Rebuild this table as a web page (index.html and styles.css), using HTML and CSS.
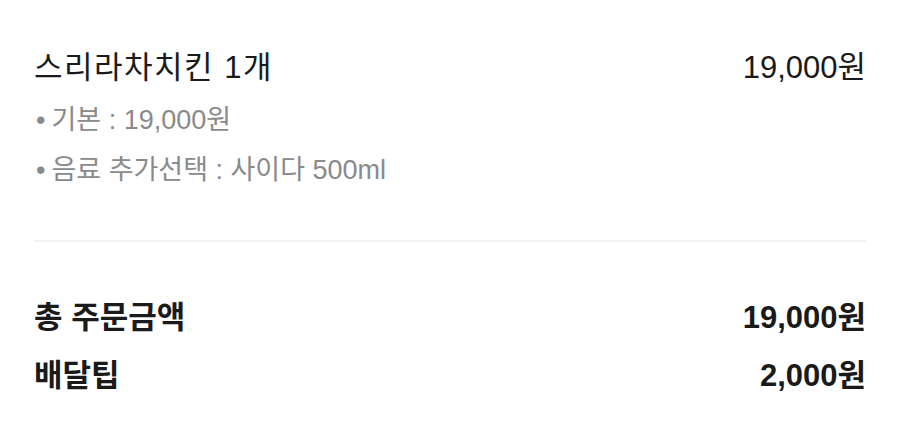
FILE: index.html
```html
<!DOCTYPE html>
<html lang="ko">
<head>
  <meta charset="UTF-8">
  <title>주문 내역</title>
  <link rel="stylesheet" href="styles.css">
</head>
<body>
  <!-- Menu item -->
  <div class="item">
    <div class="item-row">
      <span class="item-name">스리라차치킨 1개</span>
      <span class="item-price">19,000원</span>
    </div>
    <ul class="options">
      <li>기본 : 19,000원</li>
      <li>음료 추가선택 : 사이다 500ml</li>
    </ul>
  </div>

  <hr class="divider">

  <!-- Totals -->
  <div class="totals">
    <div class="total-row">
      <span>총 주문금액</span>
      <span>19,000원</span>
    </div>
    <div class="total-row">
      <span>배달팁</span>
      <span>2,000원</span>
    </div>
  </div>
</body>
</html>
```

FILE: styles.css
```css
body {
  font-family: "Liberation Sans", "Noto Sans CJK KR", sans-serif;
  background: #fff;
  color: #1a1a1a;
  margin: 0;
  padding: 0 34px;
}

.item {
  padding-top: 43px;
}

.item-row {
  display: flex;
  justify-content: space-between;
  align-items: center;
  font-size: 31px;
  line-height: 50px;
  margin-bottom: 2px;
}

.item-name {
  letter-spacing: 1.5px;
}

.options {
  list-style: none;
  margin: 0;
  padding: 0 0 0 2px;
  color: #8a8a8a;
  font-size: 27px;
  line-height: 50px;
}

.options li::before {
  content: "•";
  margin-right: 6px;
}

.divider {
  border: none;
  height: 2px;
  background: #f3f3f3;
  margin: 45px 0 0 0;
}

.totals {
  padding-top: 47px;
}

.total-row {
  display: flex;
  justify-content: space-between;
  align-items: center;
  font-size: 31px;
  font-weight: bold;
  line-height: 58px;
}
```
